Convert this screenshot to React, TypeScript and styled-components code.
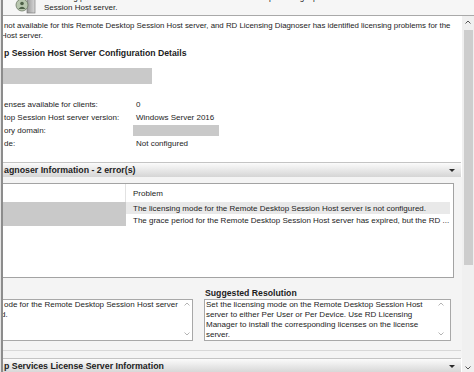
import React from "react";
import styled, { createGlobalStyle } from "styled-components";

const GlobalStyle = createGlobalStyle`
  html, body {
    margin: 0;
    padding: 0;
    background: #f0f0f0;
    overflow: hidden;
  }
  body {
    font-family: "Liberation Sans", Arial, sans-serif;
    font-size: 8px;
    color: #1c1c1c;
  }
`;

const Window = styled.div`
  width: 474px;
  height: 372px;
  display: flex;
  overflow: hidden;
  background: #fff;
`;

const Edge = styled.div`
  flex: none;
  width: 1px;
  background: #e4e4e4;
  border-right: 2px solid #8c8c8c;
`;

const Main = styled.div`
  flex: 1;
  min-width: 0;
  display: flex;
  flex-direction: column;
`;

const Banner = styled.div`
  flex: none;
  height: 15px;
  display: flex;
  background: #f6f6f6;
  border-bottom: 1px solid #a9a9a9;
  overflow: hidden;
`;

const BannerIcon = styled.svg`
  flex: none;
  margin: -6px 0 0 11px;
`;

const BannerText = styled.div`
  margin: -7px 0 0 8px;
  line-height: 10px;
  white-space: nowrap;
`;

const Body = styled.div`
  flex: 1;
  min-height: 0;
  display: flex;
`;

const Content = styled.div`
  flex: 1;
  min-width: 0;
  display: flex;
  flex-direction: column;
  overflow: hidden;
`;

const Intro = styled.div`
  flex: none;
  height: 146px;
  padding: 0 1px;
  background: #fff;
  white-space: nowrap;
`;

const Para = styled.p`
  margin: 5px 0 0;
  line-height: 10px;
  font-size: 7.85px;
`;

const Heading = styled.div`
  margin-top: 7px;
  line-height: 10px;
  font-size: 8.7px;
  font-weight: bold;
`;

const Redacted = styled.div<{ $w: number; $h: number }>`
  width: ${(p) => p.$w}px;
  height: ${(p) => p.$h}px;
  background: #c9c9c9;
`;

const ServerBlock = styled(Redacted)`
  margin: 10px 0 0 -1px;
`;

const PropGrid = styled.div`
  margin-top: 14px;
  display: grid;
  grid-template-columns: 132px auto;
  grid-auto-rows: 13px;
  align-items: center;
`;

const DomainBlock = styled(Redacted)`
  margin: -1px 0 0 -3px;
`;

const SectionBar = styled.div`
  flex: none;
  height: 14px;
  margin-right: 1px;
  padding: 0 6px 0 1px;
  display: flex;
  align-items: center;
  justify-content: space-between;
  background: linear-gradient(#fbfbfb, #d5d5d5);
  border-top: 1px solid #c4c4c4;
  font-size: 8.8px;
  font-weight: bold;
  color: #222;
  white-space: nowrap;
`;

const Caret = styled.span`
  width: 0;
  height: 0;
  border-left: 3px solid transparent;
  border-right: 3px solid transparent;
  border-top: 3px solid #2a2a2a;
`;

const Panel = styled.div`
  flex: none;
  height: 175px;
  padding-top: 6px;
  background: #f4f4f4;
  display: flex;
  flex-direction: column;
`;

const ListBox = styled.div`
  flex: none;
  height: 95px;
  box-sizing: border-box;
  margin-right: 8px;
  background: #fff;
  border: 1px solid #a3a3a3;
  border-left: none;
`;

const ListRow = styled.div<{ $head?: boolean; $selected?: boolean }>`
  display: grid;
  grid-template-columns: 123px 1fr;
  height: ${(p) => (p.$head ? 18 : 12)}px;
  margin-right: 3px;
  white-space: nowrap;
  & > span {
    display: flex;
    align-items: center;
    overflow: hidden;
  }
  & > span:last-child {
    padding-left: 7px;
    background: ${(p) => (p.$selected ? "#e9e9e9" : "transparent")};
  }
`;

const KeyCell = styled.span<{ $head?: boolean }>`
  background: ${(p) => (p.$head ? "transparent" : "#c9c9c9")};
  border-right: ${(p) => (p.$head ? "1px solid #e2e2e2" : "none")};
`;

const Resolution = styled.div`
  margin-top: 10px;
  display: grid;
  grid-template-columns: 190px 247px;
  grid-template-rows: 10px 42px;
  column-gap: 11px;
  row-gap: 1px;
`;

const ResTitle = styled.div`
  grid-column: 2;
  padding-left: 1px;
  line-height: 10px;
  font-size: 8.7px;
  font-weight: bold;
`;

const TextBox = styled.div<{ $cut?: boolean }>`
  grid-row: 2;
  display: flex;
  box-sizing: border-box;
  background: #fff;
  border: 1px solid #a8a8a8;
  border-left: ${(p) => (p.$cut ? "none" : "1px solid #a8a8a8")};
  overflow: hidden;
`;

const BoxText = styled.div`
  flex: 1;
  padding: 0 0 0 1px;
  line-height: 10px;
  white-space: nowrap;
`;

const MiniScroll = styled.div`
  flex: none;
  width: 18px;
  display: flex;
  flex-direction: column;
  align-items: center;
  justify-content: space-between;
  padding: 2px 0 4px;
`;

const Divider = styled.div`
  margin: 9px 1px 0 0;
  height: 1px;
  background: #d8d8d8;
`;

const ScrollBar = styled.div`
  flex: none;
  width: 12px;
  display: flex;
  flex-direction: column;
  align-items: center;
  background: #f0f0f0;
`;

const ArrowCell = styled.div`
  height: 12px;
  display: flex;
  align-items: center;
  justify-content: center;
`;

const Thumb = styled.div`
  margin-top: 2px;
  width: 9px;
  height: 235px;
  background: #cdcdcd;
`;

const DownCell = styled(ArrowCell)`
  margin-top: auto;
  margin-bottom: -2px;
`;

const Chevron = ({ up, color }: { up?: boolean; color: string }) => (
  <svg width="6" height="4" viewBox="0 0 6 4">
    <path
      d={up ? "M0.5 3.5 L3 1 L5.5 3.5" : "M0.5 0.5 L3 3 L5.5 0.5"}
      fill="none"
      stroke={color}
      strokeWidth="1"
    />
  </svg>
);

const props = [
  ["enses available for clients:", "0"],
  ["top Session Host server version:", "Windows Server 2016"],
  ["ory domain:", null],
  ["de:", "Not configured"],
];

export default function App() {
  return (
    <>
      <GlobalStyle />
      <Window>
        <Edge />
        <Main>
          <Banner>
            <BannerIcon width="22" height="20" viewBox="0 0 22 20">
              <defs>
                <linearGradient id="tower" x1="0" x2="1">
                  <stop offset="0" stopColor="#9a9a9a" />
                  <stop offset="1" stopColor="#d8d8d8" />
                </linearGradient>
              </defs>
              <rect x="13" y="2" width="8" height="17" fill="url(#tower)" stroke="#6f6f6f" strokeWidth="0.6" />
              <circle cx="8" cy="11" r="6" fill="#b9c7b0" stroke="#6d7a66" strokeWidth="0.8" />
              <circle cx="8" cy="9.5" r="1.8" fill="#4d5f47" />
              <path d="M4.5 15 Q8 10.5 11.5 15" fill="#4d5f47" />
            </BannerIcon>
            <BannerText>
              Licensing problems have been identified for the Remote Desktop that might prevent this server from
              <br />
              Session Host server.
            </BannerText>
          </Banner>
          <Body>
            <Content>
              <Intro>
                <Para>
                  not available for this Remote Desktop Session Host server, and RD Licensing Diagnoser has identified licensing problems for the
                  <br />
                  <span style={{ marginLeft: -3 }}>Host server.</span>
                </Para>
                <Heading>p Session Host Server Configuration Details</Heading>
                <ServerBlock $w={149} $h={16} />
                <PropGrid>
                  {props.map(([label, value]) => (
                    <React.Fragment key={label}>
                      <span>{label}</span>
                      {value === null ? <DomainBlock $w={86} $h={11} /> : <span>{value}</span>}
                    </React.Fragment>
                  ))}
                </PropGrid>
              </Intro>
              <SectionBar>
                <span>agnoser Information - 2 error(s)</span>
                <Caret />
              </SectionBar>
              <Panel>
                <ListBox>
                  <ListRow $head>
                    <KeyCell $head />
                    <span>Problem</span>
                  </ListRow>
                  <ListRow $selected>
                    <KeyCell />
                    <span>The licensing mode for the Remote Desktop Session Host server is not configured.</span>
                  </ListRow>
                  <ListRow>
                    <KeyCell />
                    <span>The grace period for the Remote Desktop Session Host server has expired, but the RD ...</span>
                  </ListRow>
                </ListBox>
                <Resolution>
                  <ResTitle>Suggested Resolution</ResTitle>
                  <TextBox $cut>
                    <BoxText>
                      ode for the Remote Desktop Session Host server
                      <br />
                      <span style={{ marginLeft: -3 }}>d.</span>
                    </BoxText>
                    <MiniScroll>
                      <Chevron up color="#b4b4b4" />
                      <Chevron color="#b4b4b4" />
                    </MiniScroll>
                  </TextBox>
                  <TextBox>
                    <BoxText>
                      Set the licensing mode on the Remote Desktop Session Host
                      <br />
                      server to either Per User or Per Device. Use RD Licensing
                      <br />
                      Manager to install the corresponding licenses on the license
                      <br />
                      server.
                    </BoxText>
                    <MiniScroll>
                      <Chevron up color="#b4b4b4" />
                      <Chevron color="#b4b4b4" />
                    </MiniScroll>
                  </TextBox>
                </Resolution>
                <Divider />
              </Panel>
              <SectionBar>
                <span>p Services License Server Information</span>
                <Caret />
              </SectionBar>
            </Content>
            <ScrollBar>
              <ArrowCell>
                <Chevron up color="#555" />
              </ArrowCell>
              <Thumb />
              <DownCell>
                <Chevron color="#555" />
              </DownCell>
            </ScrollBar>
          </Body>
        </Main>
      </Window>
    </>
  );
}
